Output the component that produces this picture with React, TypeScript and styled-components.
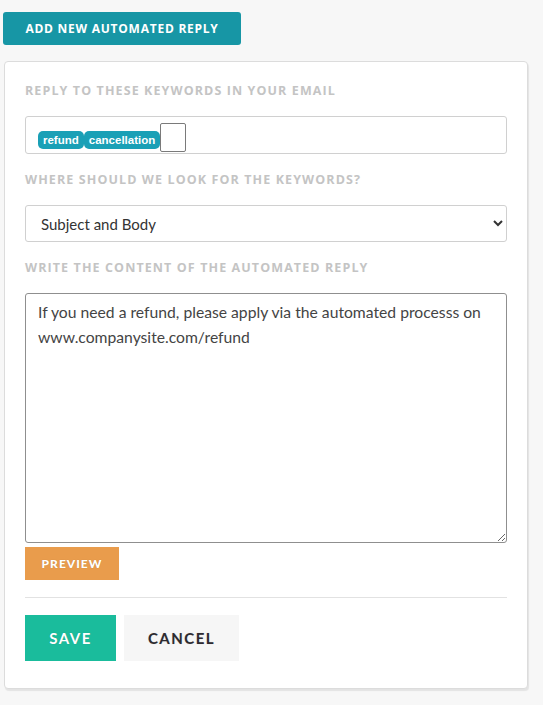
import React from "react";
import styled, { createGlobalStyle } from "styled-components";

const Global = createGlobalStyle`
  html, body { margin: 0; padding: 0; background: #f7f7f7; }
  body { font-family: Lato, "Open Sans", sans-serif; }
  * { box-sizing: border-box; }
`;

const Page = styled.div`
  padding: 12px 15px 16px 3px;
  display: flex;
  flex-direction: column;
  align-items: flex-start;
`;

const AddButton = styled.button`
  width: 238px;
  height: 33px;
  border: none;
  border-radius: 3px;
  background: #1796a5;
  color: #fff;
  font-family: "Open Sans", sans-serif;
  font-weight: 700;
  font-size: 12px;
  letter-spacing: 0.75px;
  text-transform: uppercase;
  padding: 0;
  cursor: pointer;
`;

const Card = styled.div`
  margin-top: 16px;
  margin-left: 1px;
  width: 524px;
  background: #fff;
  border: 1px solid #dcdcdc;
  border-radius: 4px;
  box-shadow: 1px 2px 1px rgba(0, 0, 0, 0.08);
  padding: 22px 20px 27px;
  display: flex;
  flex-direction: column;
  align-items: stretch;
`;

const Label = styled.div<{ $first?: boolean }>`
  font-family: "Open Sans", sans-serif;
  font-weight: 700;
  font-size: 12.5px;
  line-height: 14px;
  letter-spacing: 1.1px;
  color: #c4c4c4;
  text-transform: uppercase;
  margin-top: ${(p) => (p.$first ? "0" : "19px")};
  margin-bottom: 18px;
`;

const TagBox = styled.div`
  height: 38px;
  border: 1px solid #d0d0d0;
  border-radius: 3px;
  padding: 0 12px;
  display: flex;
  align-items: flex-end;
  padding-bottom: 1px;
`;

const Tag = styled.span`
  height: 18px;
  line-height: 18px;
  padding: 0 5px;
  margin-bottom: 3px;
  background: #1aa0b6;
  color: #fff;
  border-radius: 5px;
  font-family: "Liberation Sans", Arial, sans-serif;
  font-weight: 700;
  font-size: 11.5px;
`;

const TagInput = styled.input`
  width: 26px;
  height: 29px;
  border: 1px solid #7a7a7a;
  border-radius: 2px;
  padding: 0;
  margin: 0;
  background: #fff;
  outline: none;
`;

const Select = styled.select`
  height: 37px;
  width: 100%;
  border: 1px solid #d0d0d0;
  border-radius: 3px;
  background: #fff;
  padding: 0 20px 0 11px;
  font-family: Lato, sans-serif;
  font-size: 15px;
  color: #333;
  outline: none;
`;

const TextArea = styled.textarea`
  display: block;
  width: 100%;
  height: 250px;
  border: 1px solid #8f8f8f;
  border-radius: 3px;
  padding: 6px 12px;
  font-family: Lato, sans-serif;
  font-size: 15.7px;
  line-height: 25px;
  color: #444;
  outline: none;
  margin: 0;
`;

const SmallButton = styled.button`
  align-self: flex-start;
  margin-top: 4px;
  width: 94px;
  height: 33px;
  border: none;
  background: #e99c4c;
  color: #fff;
  font-family: Lato, sans-serif;
  font-weight: 900;
  font-size: 12px;
  letter-spacing: 1px;
  text-shadow: 0 0 1px rgba(0, 0, 0, 0.2);
  padding: 0;
`;

const Divider = styled.hr`
  border: none;
  border-top: 1px solid #e2e2e2;
  margin: 17px 0 17px;
  width: 100%;
`;

const Actions = styled.div`
  display: flex;
  gap: 8px;
`;

const ActionButton = styled.button<{ $primary?: boolean }>`
  height: 46px;
  width: ${(p) => (p.$primary ? "91px" : "115px")};
  border: none;
  background: ${(p) => (p.$primary ? "#1abc9c" : "#f6f6f6")};
  color: ${(p) => (p.$primary ? "#fff" : "#2d2a30")};
  font-family: Lato, sans-serif;
  font-weight: 700;
  font-size: 15px;
  letter-spacing: 1.5px;
  text-shadow: 0 0 1px rgba(0, 0, 0, 0.2);
  padding: 0;
`;

export default function App() {
  return (
    <>
      <Global />
      <Page>
        <AddButton>Add new automated reply</AddButton>
        <Card>
          <Label $first>Reply to these keywords in your email</Label>
          <TagBox>
            <Tag>refund</Tag>
            <Tag>cancellation</Tag>
            <TagInput />
          </TagBox>
          <Label>Where should we look for the keywords?</Label>
          <Select defaultValue="both">
            <option value="both">Subject and Body</option>
            <option value="subject">Subject</option>
            <option value="body">Body</option>
          </Select>
          <Label>Write the content of the automated reply</Label>
          <TextArea defaultValue="If you need a refund, please apply via the automated processs on www.companysite.com/refund" />
          <SmallButton>PREVIEW</SmallButton>
          <Divider />
          <Actions>
            <ActionButton $primary>SAVE</ActionButton>
            <ActionButton>CANCEL</ActionButton>
          </Actions>
        </Card>
      </Page>
    </>
  );
}
